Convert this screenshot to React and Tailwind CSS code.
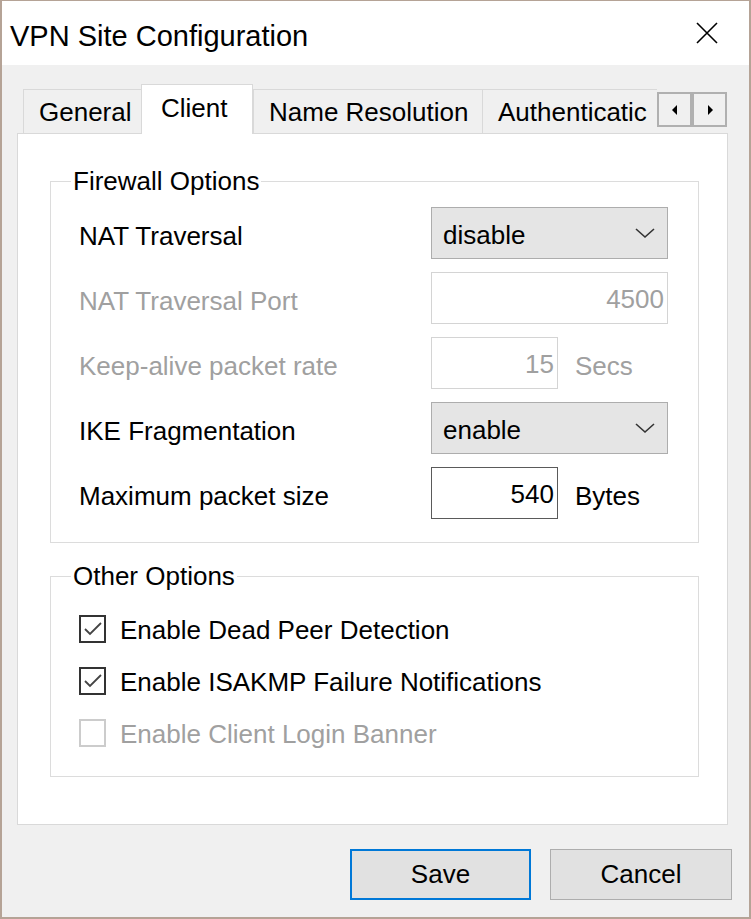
const font = { fontFamily: '"Liberation Sans", Arial, sans-serif' };

function Chevron() {
  return (
    <svg width="22" height="14" viewBox="0 0 22 14" className="shrink-0">
      <path d="M2 3 L11 11 L20 3" fill="none" stroke="#333" strokeWidth="1.6" />
    </svg>
  );
}

function Select({ value }) {
  return (
    <div className="w-[237px] h-[52px] bg-[#e5e5e5] border border-[#adadad] flex items-center justify-between pl-[11px] pr-[11px] text-[26px] text-black">
      <span className="pt-[4px]">{value}</span>
      <Chevron />
    </div>
  );
}

function Field({ value, width, disabled }) {
  return (
    <div
      className={`${width} h-[52px] bg-white flex items-center justify-end pr-[3px] pt-[3px] text-[26px] ${
        disabled ? "border border-[#d4d4d4] text-[#a0a0a0]" : "border border-[#5a5a5a] text-black"
      }`}
    >
      {value}
    </div>
  );
}

function Row({ label, disabled, children }) {
  return (
    <div className="flex items-center h-[52px]">
      <div className={`w-[352px] pt-[7px] text-[26px] ${disabled ? "text-[#a0a0a0]" : "text-black"}`}>{label}</div>
      {children}
    </div>
  );
}

function Check({ label, checked, disabled }) {
  return (
    <div className="flex items-center h-[52px] gap-[14px]">
      <div
        className={`w-[27px] h-[28px] bg-white flex items-center justify-center border-2 ${
          disabled ? "border-[#cccccc]" : "border-[#333333]"
        }`}
      >
        {checked && (
          <svg width="20" height="16" viewBox="0 0 20 16">
            <path d="M2 8 L7 13 L18 2" fill="none" stroke="#444" strokeWidth="1.8" />
          </svg>
        )}
      </div>
      <span className={`text-[26px] pt-[2px] ${disabled ? "text-[#a0a0a0]" : "text-black"}`}>{label}</span>
    </div>
  );
}

function Tab({ label, width, active }) {
  return active ? (
    <div
      className={`${width} h-[50px] bg-white border-t border-l border-r border-[#d9d9d9] -mb-px relative z-10 flex items-start pt-[4px] pl-[19px] text-[26px]`}
    >
      {label}
    </div>
  ) : (
    <div
      className={`${width} h-[44px] bg-[#f0f0f0] border-t border-l border-[#d9d9d9] flex items-center pl-[15px] pt-[2px] text-[26px] overflow-hidden whitespace-nowrap`}
    >
      {label}
    </div>
  );
}

function ArrowBtn({ dir }) {
  return (
    <div className="w-[35px] h-[35px] bg-[#f0f0f0] border-2 border-[#b0b0b0] flex items-center justify-center">
      <svg width="8" height="12" viewBox="0 0 8 12">
        {dir === "left" ? <path d="M6 1 L1 6 L6 11 Z" fill="#000" /> : <path d="M2 1 L7 6 L2 11 Z" fill="#000" />}
      </svg>
    </div>
  );
}

export default function App() {
  return (
    <div style={font} className="w-[751px] h-[919px] flex flex-col border-l-2 border-r-2 border-t border-b-2 border-[#b5a396] text-black">
      <div className="h-[64px] bg-white flex items-center justify-between pl-[8px] pr-[31px] shrink-0">
        <span className="text-[29px] pt-[7px]">VPN Site Configuration</span>
        <svg width="22" height="22" viewBox="0 0 22 22">
          <path d="M1 1 L21 21 M21 1 L1 21" stroke="#000" strokeWidth="1.6" />
        </svg>
      </div>

      <div className="flex-1 bg-[#f0f0f0] flex flex-col">
        <div className="h-[68px] flex items-end pl-[21px] shrink-0">
          <Tab label="General" width="w-[118px]" />
          <Tab label="Client" width="w-[112px]" active />
          <Tab label="Name Resolution" width="w-[229px]" />
          <Tab label="Authenticatic" width="w-[175px]" />
          <div className="self-start mt-[27px] flex">
            <ArrowBtn dir="left" />
            <ArrowBtn dir="right" />
          </div>
        </div>

        <div className="ml-[15px] mr-[21px] h-[692px] bg-white border border-[#d9d9d9] pt-[32px] pl-[32px] pr-[28px] shrink-0">
          <fieldset className="border border-[#dcdcdc] pl-[28px] pt-[11px] pb-[23px]">
            <legend className="ml-[-8px] px-[2px] text-[26px] leading-[30px]">Firewall Options</legend>
            <div className="flex flex-col gap-[13px]">
              <Row label="NAT Traversal">
                <Select value="disable" />
              </Row>
              <Row label="NAT Traversal Port" disabled>
                <Field value="4500" width="w-[237px]" disabled />
              </Row>
              <Row label="Keep-alive packet rate" disabled>
                <Field value="15" width="w-[127px]" disabled />
                <span className="ml-[17px] pt-[7px] text-[26px] text-[#a0a0a0]">Secs</span>
              </Row>
              <Row label="IKE Fragmentation">
                <Select value="enable" />
              </Row>
              <Row label="Maximum packet size">
                <Field value="540" width="w-[127px]" />
                <span className="ml-[17px] pt-[7px] text-[26px]">Bytes</span>
              </Row>
            </div>
          </fieldset>

          <fieldset className="mt-[18px] border border-[#dcdcdc] pl-[28px] pt-[12px] pb-[17px]">
            <legend className="ml-[-8px] px-[2px] text-[26px] leading-[30px]">Other Options</legend>
            <Check label="Enable Dead Peer Detection" checked />
            <Check label="Enable ISAKMP Failure Notifications" checked />
            <Check label="Enable Client Login Banner" disabled />
          </fieldset>
        </div>

        <div className="flex justify-end gap-[19px] pt-[24px] pr-[17px]">
          <button className="w-[181px] h-[51px] bg-[#e1e1e1] border-2 border-[#0078d7] text-[26px]">Save</button>
          <button className="w-[182px] h-[51px] bg-[#e1e1e1] border border-[#adadad] text-[26px]">Cancel</button>
        </div>
      </div>
    </div>
  );
}
